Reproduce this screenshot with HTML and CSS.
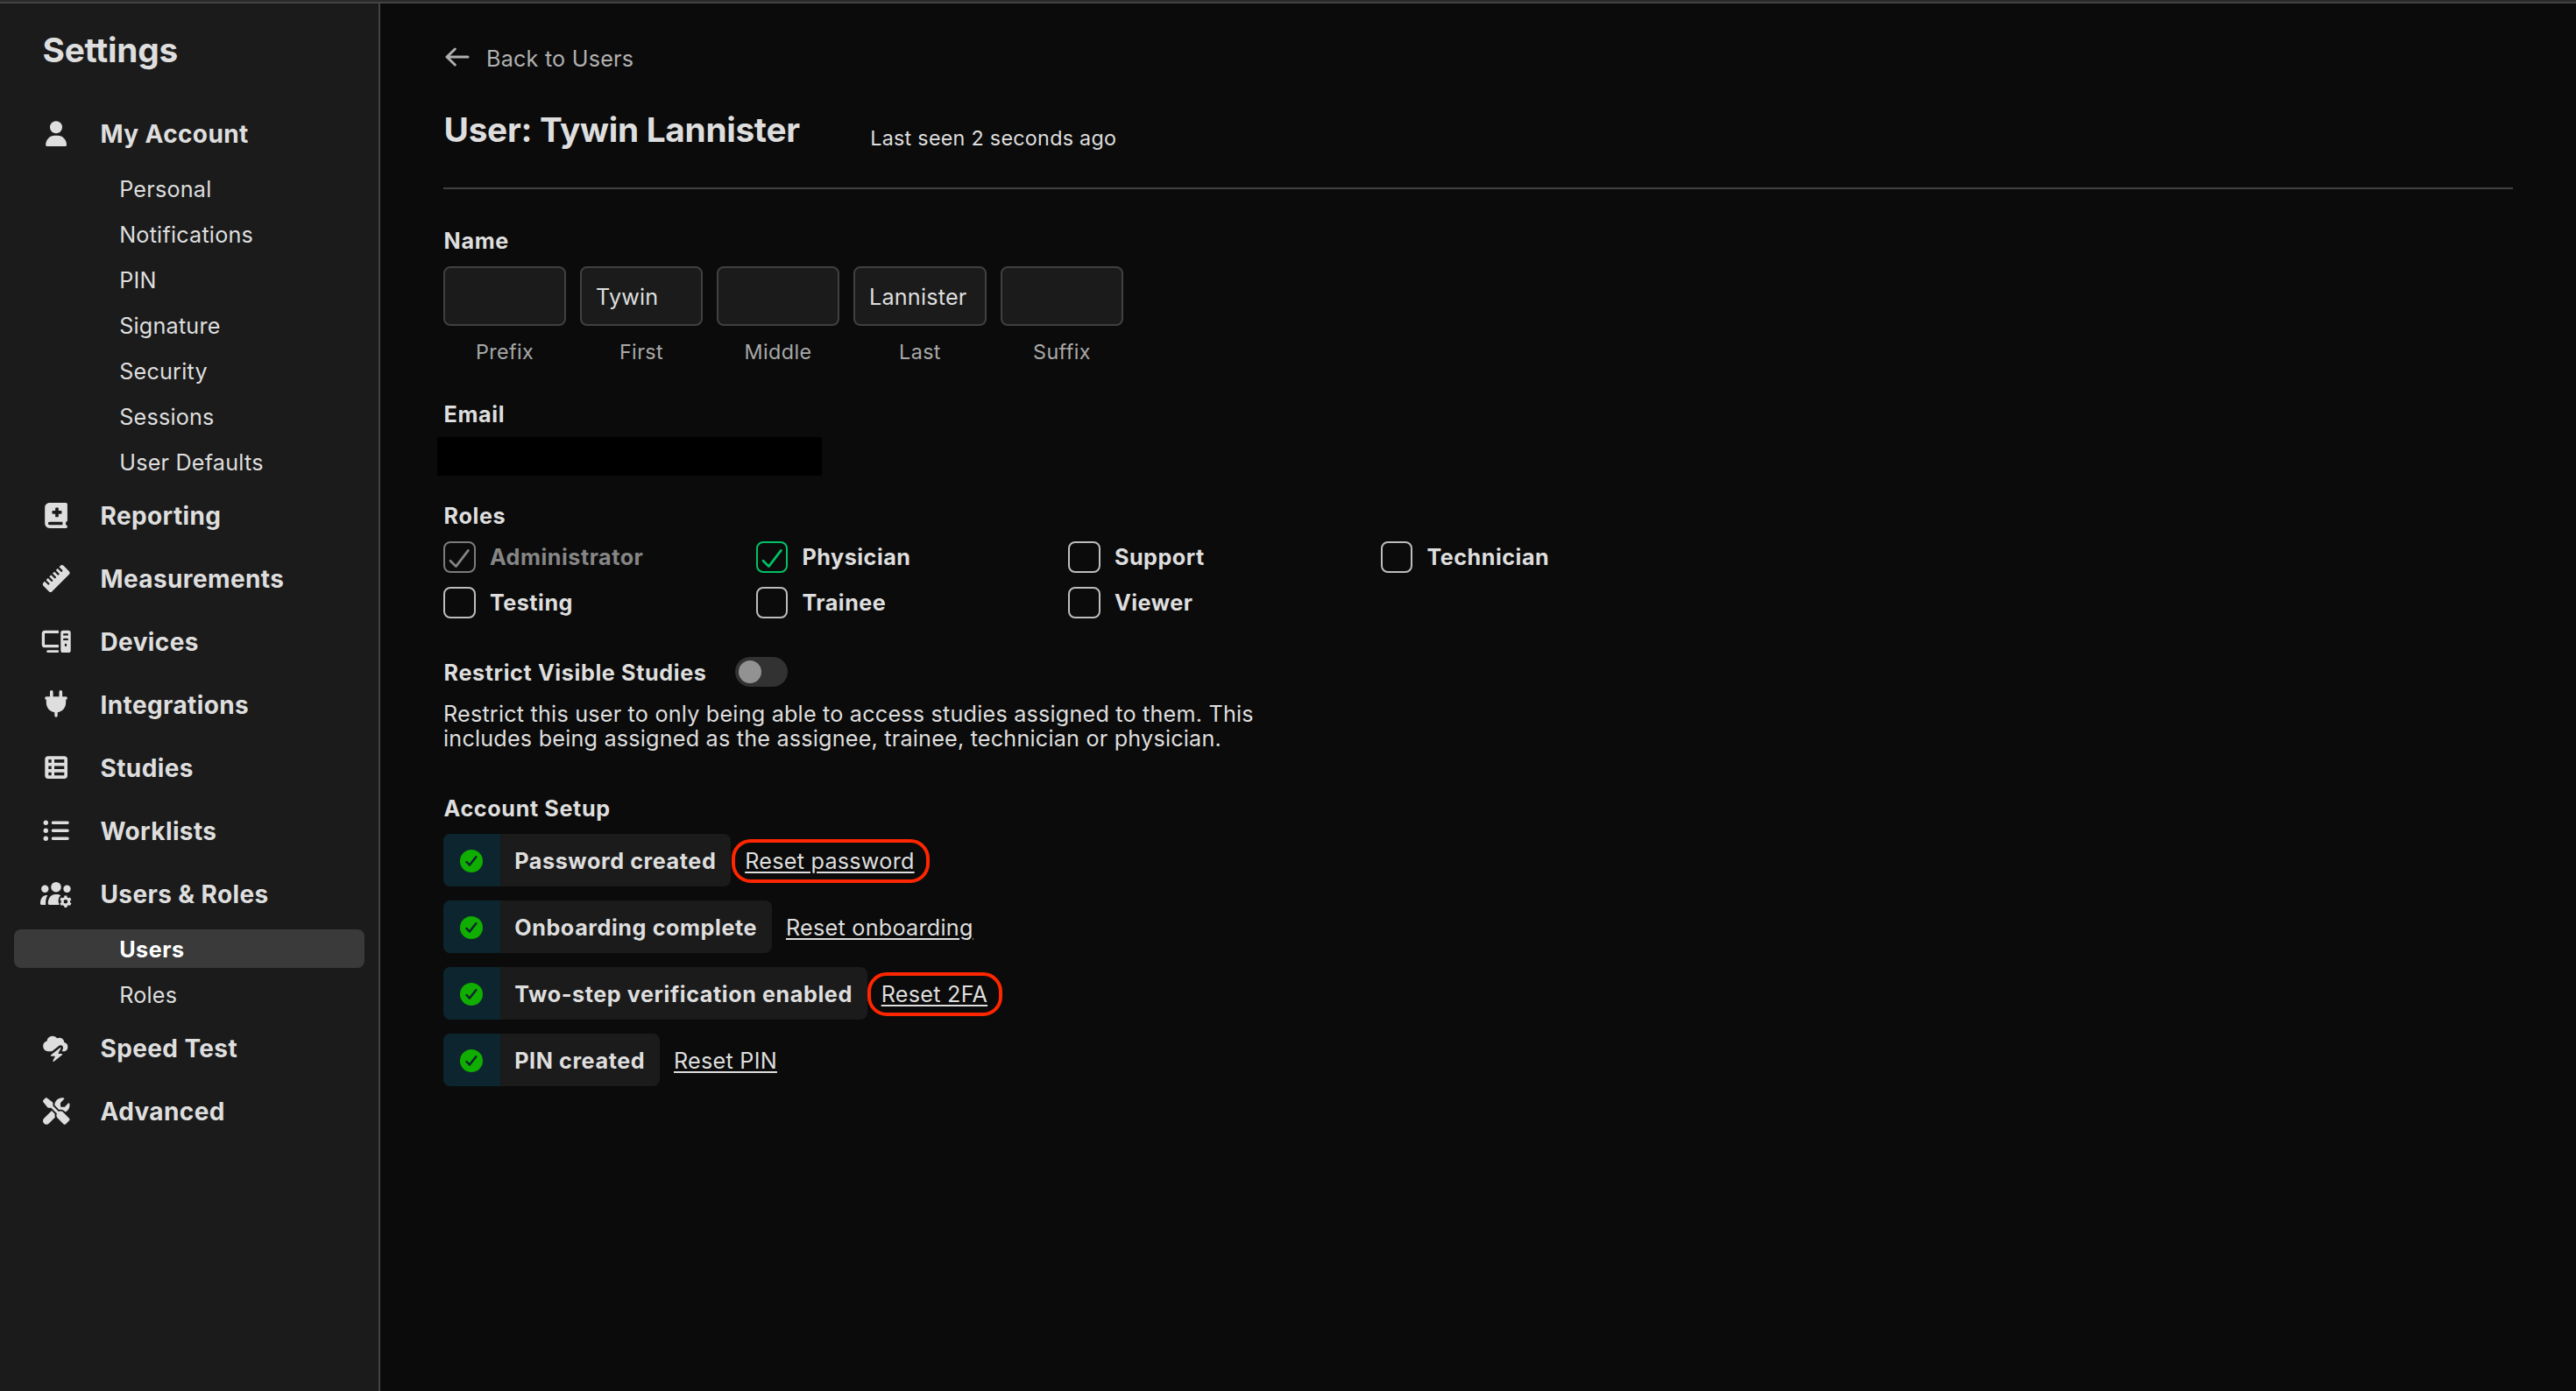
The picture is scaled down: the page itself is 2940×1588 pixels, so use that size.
FILE: index.html
```
<!DOCTYPE html>
<html lang="en">
<head>
<meta charset="utf-8">
<title>Settings</title>
<link rel="stylesheet" href="styles.css">
</head>
<body>
<svg class="defs" width="0" height="0" aria-hidden="true">
  <symbol id="tick-box" viewBox="0 0 36 36"><path d="M8 22.2 14.4 28.6 28.4 10.4" fill="none" stroke="currentColor" stroke-width="2.7" stroke-linecap="round" stroke-linejoin="round"/></symbol>
  <symbol id="done" viewBox="0 0 26 26"><circle cx="13" cy="13" r="13" fill="#10ae00"/><path d="M7.5 14 11 17.6 18.3 8.2" fill="none" stroke="#0d252f" stroke-width="2.5" stroke-linecap="round" stroke-linejoin="round"/></symbol>
</svg>
<div class="window">
  <nav class="sidebar">
    <h1 class="sidebar-title">Settings</h1>
    <ul class="menu">
      <li>
        <a class="menu-head"><svg class="icon" viewBox="0 0 40 40"><circle cx="20" cy="12.3" r="7"/><path d="M8.2 32.5C8.2 26.5 12.6 21.7 18.6 21.7h3C27.6 21.7 32 26.5 32 32.5a1.5 1.5 0 0 1-1.5 1.5H9.7a1.5 1.5 0 0 1-1.5-1.5z"/></svg><span>My Account</span></a>
        <ul class="submenu">
          <li>Personal</li>
          <li>Notifications</li>
          <li>PIN</li>
          <li>Signature</li>
          <li>Security</li>
          <li>Sessions</li>
          <li>User Defaults</li>
        </ul>
      </li>
      <li><a class="menu-head"><svg class="icon" viewBox="0 0 40 40"><path transform="translate(7.2 5) scale(.0574 .0566)" d="M0 96C0 43 43 0 96 0H384h32c17.7 0 32 14.3 32 32V352c0 17.7-14.3 32-32 32v64c17.7 0 32 14.3 32 32s-14.3 32-32 32H384 96c-53 0-96-43-96-96V96zM64 416c0 17.7 14.3 32 32 32H352V384H96c-17.7 0-32 14.3-32 32zM208 112v48H160c-8.8 0-16 7.2-16 16v32c0 8.800 7.200 16 16 16h48v48c0 8.800 7.200 16 16 16h32c8.800 0 16-7.200 16-16V224h48c8.800 0 16-7.200 16-16V176c0-8.800-7.200-16-16-16H272V112c0-8.800-7.200-16-16-16H224c-8.800 0-16 7.200-16 16z"/></svg><span>Reporting</span></a></li>
      <li><a class="menu-head"><svg class="icon" viewBox="0 0 40 40"><g transform="translate(20.200 19.500) rotate(-45)"><rect x="-16.300" y="-7" width="32.600" height="14" rx="2.500"/><path class="cut" d="M-10.500-8v6M-5.200-8v6M0-8v6M5.200-8v6M10.500-8v6"/></g></svg><span>Measurements</span></a></li>
      <li><a class="menu-head"><svg class="icon" viewBox="0 0 40 40"><path d="M22.900 8.350H7.400a2 2 0 0 0-2 2v12.300a2 2 0 0 0 2 2h15.500" fill="none" stroke="currentColor" stroke-width="3.300"/><path d="M10.600 29.300h12.300V32H10.600a1.350 1.350 0 0 1 0-2.700z"/><rect x="25.300" y="6.700" width="11.400" height="25.300" rx="2.600"/><path class="cut" d="M29.200 11.400h3.600M29.200 16.900h3.600M31 22.900v.8"/></svg><span>Devices</span></a></li>
      <li><a class="menu-head"><svg class="icon" viewBox="0 0 40 40"><path d="M13 11V4.800a1.800 1.800 0 0 1 3.600 0V11zM23.500 11V4.800a1.800 1.800 0 0 1 3.600 0V11zM9 10.300h22.200a1.700 1.700 0 0 1 0 3.400v3.600c0 5.800-4.200 10.200-9.500 11v3.700a1.700 1.700 0 0 1-3.400 0v-3.700c-5.300-.8-9.500-5.200-9.500-11v-3.600a1.700 1.700 0 0 1 .2-3.400z"/></svg><span>Integrations</span></a></li>
      <li><a class="menu-head"><svg class="icon" viewBox="0 0 40 40"><path fill-rule="evenodd" d="M11 6.300h18.300a3.700 3.700 0 0 1 3.700 3.700v18.300a3.700 3.700 0 0 1-3.700 3.700H11a3.700 3.700 0 0 1-3.700-3.700V10A3.700 3.700 0 0 1 11 6.300zM11.300 10v3.700h3.400V10zM18 10v3.700h11.300V10zM11.300 17.500v3.500h3.400v-3.500zM18 17.500v3.500h11.300v-3.500zM11.300 24.800v3.500h3.400v-3.500zM18 24.800v3.500h11.300v-3.500z"/></svg><span>Studies</span></a></li>
      <li><a class="menu-head"><svg class="icon" viewBox="0 0 40 40"><circle cx="8.300" cy="10.300" r="2.700"/><circle cx="8.300" cy="19.300" r="2.700"/><circle cx="8.300" cy="28.300" r="2.700"/><path d="M16.400 10.300h16.700M16.400 19.300h16.700M16.400 28.300h16.700" stroke="currentColor" stroke-width="3.400" stroke-linecap="round"/></svg><span>Worklists</span></a></li>
      <li>
        <a class="menu-head"><svg class="icon" viewBox="0 0 40 40"><circle cx="7.300" cy="13.700" r="4.200"/><circle cx="20" cy="11.700" r="5.800"/><circle cx="32.500" cy="13.700" r="4.200"/><path d="M2 30.600C2 25 4.800 21 9 21h1.300C8.600 23.800 7.800 27 8.200 32H3.300A1.300 1.300 0 0 1 2 30.600z"/><path d="M10.800 30.600C10.800 24.600 14 20 19.300 20h1.700c1.700 0 3 .5 4.200 1.300-2.500 2.600-3.500 5.500-1.500 10.700H12.200a1.400 1.400 0 0 1-1.400-1.400z"/><g transform="translate(30.900 28.300)"><circle r="3.800" fill="none" stroke="currentColor" stroke-width="3"/><path d="M0-6.700v3M0 3.700v3M5.800-3.350 3.200-1.850M-5.800 3.350l2.600-1.500M5.800 3.350 3.200 1.850M-5.800-3.350l2.600 1.500" stroke="currentColor" stroke-width="3.200"/></g></svg><span>Users &amp; Roles</span></a>
        <ul class="submenu">
          <li class="active">Users</li>
          <li>Roles</li>
        </ul>
      </li>
      <li><a class="menu-head"><svg class="icon" viewBox="0 0 40 40"><path d="M12 23.300a6.100 6.100 0 0 1-2.500-11.900A6.600 6.600 0 0 1 21.300 8.300a5.500 5.500 0 0 1 8 4.700 5.300 5.300 0 0 1 0 10.300z"/><path d="M25 18.800 14 27.400q-.6 1 .6 1.300H19L16.300 34q.1 1.200 1.300.8L27 27.200q.6-1-.6-1.300H22.300l3.200-6.300q0-.8-.5-.8z" stroke="#1b1b1b" stroke-width="5" stroke-linejoin="round" paint-order="stroke"/></svg><span>Speed Test</span></a></li>
      <li><a class="menu-head"><svg class="icon" viewBox="0 0 40 40"><path transform="translate(5 4.200) scale(.0596)" d="M78.600 5C69.100-2.400 55.600-1.500 47 7L7 47c-8.500 8.500-9.400 22-2.100 31.600l80 104c4.500 5.900 11.600 9.400 19 9.400h54.100l109 109c-14.700 29-10 65.400 14.300 89.600l112 112c12.500 12.500 32.800 12.500 45.300 0l64-64c12.500-12.500 12.500-32.800 0-45.300l-112-112c-24.200-24.200-60.600-29-89.600-14.300l-109-109V104c0-7.500-3.500-14.500-9.400-19L78.600 5zM19.900 396.100C7.200 408.800 0 426.100 0 444.100C0 481.600 30.400 512 67.900 512c18 0 35.300-7.200 48-19.900L233.700 374.300c-7.800-20.900-9-43.600-3.600-65.100l-61.700-61.700L19.900 396.100zM512 144c0-10.500-1.100-20.700-3.200-30.500c-2.400-11.200-16.100-14.100-24.200-6l-63.900 63.900c-3 3-7.100 4.700-11.300 4.700H352c-8.800 0-16-7.200-16-16V102.600c0-4.200 1.700-8.300 4.700-11.300l63.900-63.900c8.100-8.100 5.200-21.800-6-24.200C388.700 1.100 378.500 0 368 0C288.500 0 224 64.500 224 144l0 .8 85.300 85.300c36-9.100 75.800 .5 104 28.700L429 274.500c49-23 83-72.800 83-130.500z"/></svg><span>Advanced</span></a></li>
    </ul>
  </nav>

  <main class="content">
    <a class="back"><svg class="back-icon" viewBox="0 0 32 32"><path d="M28 14H4M13.300 5 4 14l9.300 9" fill="none" stroke="currentColor" stroke-width="3" stroke-linecap="round" stroke-linejoin="round"/></svg>Back to Users</a>
    <header class="page-head">
      <h2 class="page-title">User: Tywin Lannister</h2>
      <span class="last-seen">Last seen 2 seconds ago</span>
    </header>

    <section class="field">
      <h3 class="label">Name</h3>
      <div class="names">
        <div class="name-part"><div class="input"></div><span class="caption">Prefix</span></div>
        <div class="name-part"><div class="input">Tywin</div><span class="caption">First</span></div>
        <div class="name-part"><div class="input"></div><span class="caption">Middle</span></div>
        <div class="name-part wide"><div class="input">Lannister</div><span class="caption">Last</span></div>
        <div class="name-part"><div class="input"></div><span class="caption">Suffix</span></div>
      </div>
    </section>

    <section class="field email">
      <h3 class="label">Email</h3>
      <div class="redacted"></div>
    </section>

    <section class="field roles-field">
      <h3 class="label">Roles</h3>
      <div class="roles">
        <div class="role disabled"><span class="box"><svg viewBox="0 0 36 36"><use href="#tick-box"/></svg></span>Administrator</div>
        <div class="role checked"><span class="box"><svg viewBox="0 0 36 36"><use href="#tick-box"/></svg></span>Physician</div>
        <div class="role"><span class="box"></span>Support</div>
        <div class="role"><span class="box"></span>Technician</div>
        <div class="role"><span class="box"></span>Testing</div>
        <div class="role"><span class="box"></span>Trainee</div>
        <div class="role"><span class="box"></span>Viewer</div>
      </div>
    </section>

    <section class="restrict">
      <div class="restrict-head"><h3 class="label">Restrict Visible Studies</h3><span class="toggle"><span class="knob"></span></span></div>
      <p class="description">Restrict this user to only being able to access studies assigned to them. This<br>includes being assigned as the assignee, trainee, technician or physician.</p>
    </section>

    <section class="field setup">
      <h3 class="label">Account Setup</h3>
      <div class="steps">
        <div class="step"><div class="badge"><span class="state"><svg viewBox="0 0 26 26"><use href="#done"/></svg></span><span class="badge-text">Password created</span></div><a class="link ringed">Reset password</a></div>
        <div class="step"><div class="badge"><span class="state"><svg viewBox="0 0 26 26"><use href="#done"/></svg></span><span class="badge-text">Onboarding complete</span></div><a class="link">Reset onboarding</a></div>
        <div class="step"><div class="badge"><span class="state"><svg viewBox="0 0 26 26"><use href="#done"/></svg></span><span class="badge-text">Two-step verification enabled</span></div><a class="link ringed">Reset 2FA</a></div>
        <div class="step"><div class="badge"><span class="state"><svg viewBox="0 0 26 26"><use href="#done"/></svg></span><span class="badge-text">PIN created</span></div><a class="link">Reset PIN</a></div>
      </div>
    </section>
  </main>
</div>
</body>
</html>
```
FILE: styles.css
```
* { box-sizing: border-box; }

body {
  margin: 0;
  background: #0b0b0b;
  color: #dedede;
  font: 400 25.2px/32px Inter, "Liberation Sans", sans-serif;
  letter-spacing: 0.2px;
}

h1, h2, h3, p, ul { margin: 0; padding: 0; }
ul { list-style: none; }
svg { display: block; fill: currentColor; }
.defs { position: absolute; }

.window {
  display: flex;
  height: 1588px;
  border-top: 2px solid #2a2a2a;
  box-shadow: inset 0 2px #424242;
  padding-top: 2px;
  overflow: hidden;
}

/* Sidebar */
.sidebar {
  width: 434px;
  flex: none;
  background: #1b1b1b;
  border-right: 2px solid #424242;
  padding: 29px 16px 0;
}

.sidebar-title {
  padding-left: 32.5px;
  font-size: 38.8px;
  font-weight: 700;
  line-height: 48px;
  letter-spacing: -0.25px;
}

.menu {
  display: flex;
  flex-direction: column;
  gap: 16px;
  margin-top: 44px;
}

.menu-head {
  display: flex;
  align-items: center;
  height: 56px;
  padding-left: 28px;
  gap: 30.5px;
  font-size: 28px;
  font-weight: 700;
  letter-spacing: 0.38px;
}

.icon { width: 40px; height: 40px; flex: none; }
.cut { fill: none; stroke: #1b1b1b; stroke-width: 2.4; stroke-linecap: round; }

.submenu {
  display: flex;
  flex-direction: column;
  gap: 8px;
  margin: 12px 0 -4px;
}

.submenu li {
  height: 44px;
  padding: 1px 0 0 120.2px;
  line-height: 44px;
  border-radius: 8px;
}

.submenu .active {
  background: #3a3a3a;
  color: #fff;
  font-weight: 700;
  letter-spacing: 0.5px;
}

/* Content */
.content {
  flex: 1;
  padding: 47px 72px 0;
}

.back {
  display: flex;
  align-items: center;
  gap: 17px;
  height: 32px;
  color: #b0b0b0;
}

.back-icon { width: 32px; height: 32px; }

.page-head {
  display: flex;
  align-items: flex-start;
  gap: 80.5px;
  height: 133px;
  padding-top: 41px;
  border-bottom: 2px solid #424242;
}

.page-title {
  padding-left: 0.6px;
  font-size: 38.8px;
  font-weight: 700;
  line-height: 48px;
  letter-spacing: -0.31px;
}

.last-seen {
  margin-top: 18px;
  font-size: 23.3px;
  letter-spacing: 0.28px;
}

.label {
  padding-left: 0.6px;
  font-size: 25.2px;
  font-weight: 700;
  line-height: 32px;
  letter-spacing: 0.61px;
}

.field {
  display: flex;
  flex-direction: column;
  gap: 13px;
  margin-top: 43px;
}

.names { display: flex; gap: 16px; }

.name-part {
  display: flex;
  flex-direction: column;
  align-items: center;
  gap: 14px;
  width: 140px;
}

.name-part.wide { width: 152px; }

.input {
  align-self: stretch;
  height: 68px;
  padding: 1px 0 0 16px;
  border: 2px solid #404040;
  border-radius: 8px;
  background: #1b1b1b;
  line-height: 64px;
}

.caption {
  color: #a8a8a8;
  font-size: 23.3px;
  letter-spacing: 0.4px;
}

.email { margin-top: 39px; gap: 10px; }

.redacted {
  width: 439px;
  height: 44px;
  margin-left: -7px;
  background: #000;
}

.roles-field { margin-top: 30px; }

.roles {
  display: grid;
  grid-template-columns: repeat(4, 356.5px);
  row-gap: 16px;
}

.role {
  display: flex;
  align-items: center;
  gap: 16.4px;
  height: 36px;
  font-weight: 700;
  letter-spacing: 0.5px;
}

.box {
  width: 36.5px;
  height: 36px;
  border: 2px solid #bdbdbd;
  border-radius: 8px;
}

.box svg { width: 36px; height: 36px; margin: -2px; }
.disabled { color: #868686; }
.disabled .box { border-color: #7c7c7c; }
.checked .box { border-color: #00c266; }
.checked .box svg { color: #00c266; }

.restrict { margin-top: 44px; }

.restrict-head {
  display: flex;
  align-items: center;
  justify-content: space-between;
  width: 393px;
  height: 34px;
}

.restrict-head .label { padding-top: 1px; }

.toggle {
  width: 60px;
  height: 34px;
  padding: 4px;
  border-radius: 17px;
  background: #323232;
}

.knob {
  display: block;
  width: 26px;
  height: 26px;
  border-radius: 50%;
  background: #929292;
}

.description { margin-top: 17px; line-height: 28px; }

.setup { margin-top: 50px; }
.steps { display: flex; flex-direction: column; gap: 16px; }
.step { display: flex; align-items: center; gap: 16px; height: 60px; }

.badge {
  display: flex;
  height: 60px;
  border-radius: 8px;
  background: #1b1b1b;
  overflow: hidden;
}

.state {
  display: flex;
  align-items: center;
  justify-content: center;
  width: 65px;
  padding: 2px 1px 0 0;
  background: #0d252f;
}

.state svg { width: 26px; height: 26px; }

.badge-text {
  padding: 1px 16.8px 0 16.2px;
  font-weight: 700;
  line-height: 60px;
  letter-spacing: 0.57px;
}

.link {
  position: relative;
  padding-top: 1px;
  letter-spacing: 0.25px;
  text-decoration: underline;
  text-decoration-thickness: 2px;
  text-underline-offset: 3px;
}

/* Highlight ring drawn around a link */
.ringed::after {
  content: "";
  position: absolute;
  inset: -8px -17px -9px -15.5px;
  border: 4px solid #ff2600;
  border-radius: 22px;
}
```
